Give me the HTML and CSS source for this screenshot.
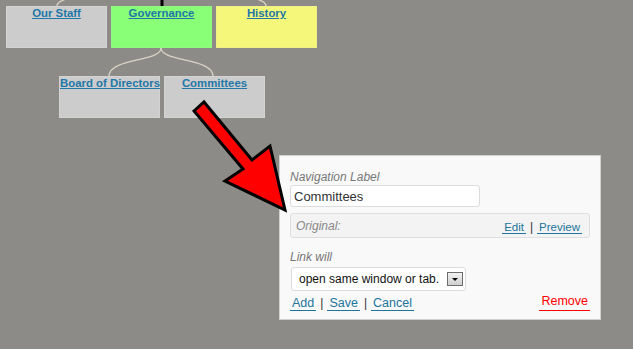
FILE: index.html
```html
<!DOCTYPE html>
<html lang="en">
<head>
    <meta charset="UTF-8">
    <title>Menu Tree - Edit Item</title>
    <link rel="stylesheet" href="styles.css">
</head>
<body>
    <svg class="connectors" width="633" height="349" viewBox="0 0 633 349">
        <path d="M161 -24 C161 -6 57 -10 57 6" />
        <path d="M161 -24 C161 -6 266 -10 266 6" />
        <path d="M161 48 C161 62 109 58 109 76" />
        <path d="M161 48 C161 62 213 58 213 76" />
        <line class="stem" x1="162" y1="0" x2="162" y2="6" />
    </svg>

    <div class="tree">
        <div class="tree-row">
            <div class="node"><a href="#">Our Staff</a></div>
            <div class="node node-green"><a href="#">Governance</a></div>
            <div class="node node-yellow"><a href="#">History</a></div>
        </div>
        <div class="tree-row tree-row-sub">
            <div class="node"><a href="#">Board of Directors</a></div>
            <div class="node"><a href="#">Committees</a></div>
        </div>
    </div>

    <div class="edit-panel">
        <label class="field-label" for="nav-label">Navigation Label</label>
        <input type="text" id="nav-label" value="Committees">

        <div class="original">
            <span class="original-label">Original:</span>
            <span class="original-links">
                <a href="#">Edit</a><span class="sep">|</span><a href="#">Preview</a>
            </span>
        </div>

        <div class="field-label link-label">Link will</div>
        <div class="fake-select">
            <span>open same window or tab.</span>
            <span class="select-btn"></span>
        </div>

        <div class="actions">
            <div>
                <a href="#">Add</a><span class="sep">|</span><a href="#">Save</a><span class="sep">|</span><a href="#">Cancel</a>
            </div>
            <a href="#" class="remove">Remove</a>
        </div>
    </div>

    <svg class="pointer" width="633" height="349" viewBox="0 0 633 349">
        <polygon points="194,111 204,102 252,160 270,146 285,210 225,181 243,169" />
    </svg>
</body>
</html>
```

FILE: styles.css
```css
body {
    margin: 0;
    width: 633px;
    height: 349px;
    overflow: hidden;
    position: relative;
    background-color: #8d8b88;
    font-family: "Liberation Sans", Arial, sans-serif;
}
a {
    color: #21759b;
}

/* tree */
.connectors {
    position: absolute;
    left: 0;
    top: 0;
}
.connectors path {
    fill: none;
    stroke: #d9d3c5;
    stroke-width: 1.3;
}
.connectors .stem {
    stroke: #000;
    stroke-width: 3;
}
.tree {
    position: relative;
    padding: 6px 0 0 6px;
}
.tree-row {
    display: flex;
    gap: 4px;
}
.tree-row-sub {
    margin: 28px 0 0 53px;
}
.node {
    width: 101px;
    height: 42px;
    box-sizing: border-box;
    border: 1px solid #d3d3d3;
    background-color: #cccccc;
    text-align: center;
    font-size: 11.4px;
    font-weight: bold;
    line-height: 13px;
    white-space: nowrap;
}
.node a {
    color: #2277a8;
}
.node-green {
    background-color: #88ff77;
    border-color: #92f882;
}
.node-yellow {
    background-color: #f5f77a;
    border-color: #f0f088;
}

/* edit panel */
.edit-panel {
    position: absolute;
    left: 279px;
    top: 155px;
    width: 322px;
    height: 165px;
    box-sizing: border-box;
    padding: 14px 10px 0;
    background-color: #f9f9f9;
    border: 1px solid #d0d0d0;
}
.field-label {
    display: block;
    font-size: 12px;
    font-style: italic;
    color: #777;
    line-height: 15px;
}
input {
    display: block;
    width: 190px;
    height: 22px;
    box-sizing: border-box;
    margin: 0;
    padding: 0 3px;
    border: 1px solid #dcdcdc;
    border-radius: 3px;
    background: #fff;
    font-family: inherit;
    font-size: 13px;
    color: #333;
}
.original {
    display: flex;
    justify-content: space-between;
    align-items: center;
    margin-top: 6px;
    height: 25px;
    box-sizing: border-box;
    padding: 0 7px 0 5px;
    border: 1px solid #dfdfdf;
    border-radius: 3px;
    background-color: #f3f3f3;
}
.original-label {
    font-size: 12px;
    font-style: italic;
    color: #888;
}
.original-links a,
.actions a {
    font-size: 12.5px;
    text-decoration: none;
    padding: 0 2px;
    border-bottom: 1px solid #21759b;
}
.original-links a {
    font-size: 11.5px;
}
.sep {
    margin: 0 4px;
    font-size: 12px;
    color: #333;
}
.link-label {
    margin-top: 12px;
    margin-bottom: 2px;
}
.fake-select {
    display: flex;
    justify-content: space-between;
    align-items: center;
    width: 175px;
    height: 24px;
    box-sizing: border-box;
    margin-left: 1px;
    padding: 0 2px 0 7px;
    border: 1px solid #dcdcdc;
    border-radius: 3px;
    background: #fff;
    font-size: 12px;
    color: #111;
}
.select-btn {
    position: relative;
    width: 16px;
    height: 14px;
    box-sizing: border-box;
    border: 1px solid #6d6d6d;
    background: linear-gradient(#f2f2f2, #cfcfcf);
}
.select-btn::after {
    content: "";
    position: absolute;
    left: 4px;
    top: 5px;
    border-left: 3px solid transparent;
    border-right: 3px solid transparent;
    border-top: 3px solid #000;
}
.actions {
    display: flex;
    justify-content: space-between;
    margin-top: 3px;
    line-height: 15px;
}
.actions a.remove {
    color: #f00;
    border-bottom-color: #f00;
}

/* red pointer arrow */
.pointer {
    position: absolute;
    left: 0;
    top: 0;
}
.pointer polygon {
    fill: #ff0000;
    stroke: #000;
    stroke-width: 3;
    stroke-linejoin: miter;
}
```
